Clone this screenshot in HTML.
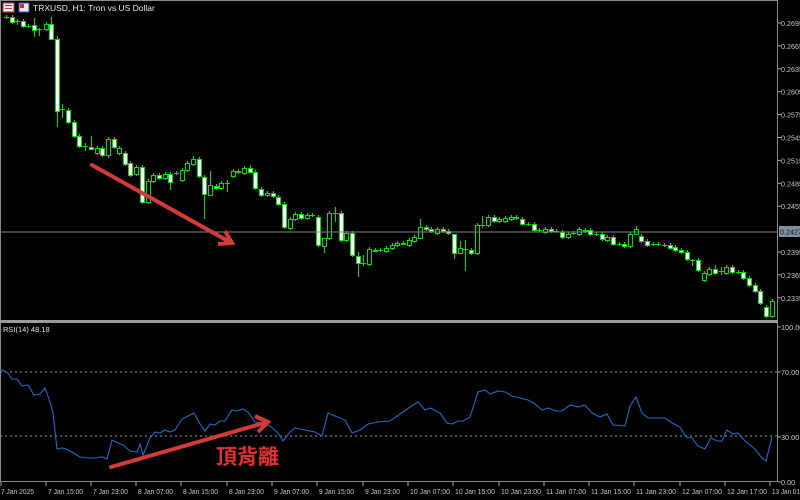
<!DOCTYPE html>
<html><head><meta charset="utf-8"><style>
html,body{margin:0;padding:0;background:#000;width:800px;height:500px;overflow:hidden}
svg{display:block}
text{font-family:"Liberation Sans",sans-serif}
</style></head><body>
<svg id="s" width="800" height="500" xmlns="http://www.w3.org/2000/svg">
<rect width="800" height="500" fill="#000"/>
<g id="candles"></g>
<line x1="0" y1="232" x2="778" y2="232" stroke="#808890" stroke-width="1"/>
<rect x="0.5" y="0.5" width="777" height="481" fill="none" stroke="#8a8a8a"/>
<rect x="0" y="320" width="778" height="3" fill="#9a9a9a"/>
<line x1="0" y1="372" x2="778" y2="372" stroke="#9a9a9a" stroke-dasharray="2,3"/>
<line x1="0" y1="436" x2="778" y2="436" stroke="#9a9a9a" stroke-dasharray="2,3"/>
<polyline id="rsi" fill="none" stroke="#1e6bc4" stroke-width="1.1"/>
<g id="axis" fill="#c8c8c8" font-size="7.3"></g>
<rect x="3" y="3" width="11" height="9" fill="#e8e8f0" stroke="#c04040"/>
<rect x="5" y="5" width="7" height="1" fill="#3050c0"/><rect x="5" y="8" width="7" height="1" fill="#c04040"/>
<rect x="19" y="3" width="10" height="9" fill="#e8e8f0" stroke="#3050c0"/>
<rect x="20" y="4" width="4" height="4" fill="#d03030"/>
<text x="33" y="11" fill="#e8e8e8" font-size="8.5">TRXUSD, H1:  Tron vs US Dollar</text>
<text x="3" y="332" fill="#e0e0e0" font-size="7.5">RSI(14) 48.18</text>
<g stroke="#d33a3a" stroke-width="4" fill="none" stroke-linecap="round">
<line x1="92" y1="165" x2="228" y2="241"/>
<polyline points="218,244 232,243 225,231" stroke-linejoin="miter" stroke-linecap="butt"/>
<line x1="111" y1="467" x2="264" y2="423"/>
<polyline points="255,416 268,422 258,432" stroke-linecap="butt"/>
</g>
<text x="216" y="464" fill="#e03232" font-size="21" font-weight="bold" style='font-family:"Liberation Sans","Noto Sans CJK TC",sans-serif'>頂背離</text>
</svg>
<script>
var C=[[6,17,17,'c'],[12,17,22,'w'],[17,21,23,'c'],[23,21,26,'w'],[28,26,26,'c'],[34,25,30,'w',18,37],[39,29,29,'c',28,36],[46,24,29,'h'],[51,24,39,'w',17,39],[57,39,111,'w',36,127],[62,109,109,'c',104,118],[68,110,122,'w'],[74,122,136,'w'],[79,136,146,'w'],[85,146,146,'c',143,151],[91,147,149,'w',136,150],[97,148,153,'h'],[102,148,155,'w'],[108,139,155,'h',137,158],[114,139,147,'w'],[119,148,153,'h'],[125,153,164,'w'],[130,163,175,'w'],[136,167,174,'h'],[142,167,202,'w'],[148,181,202,'h'],[153,175,181,'h'],[159,175,178,'w'],[165,174,178,'h'],[170,174,182,'w',172,190],[176,173,173,'c'],[182,170,180,'h'],[187,163,170,'h'],[193,159,164,'h',156,166],[199,159,176,'w'],[204,177,194,'w',175,219],[210,185,195,'h',171,195],[216,186,188,'w'],[221,183,188,'h'],[227,183,183,'c',180,192],[233,171,176,'h'],[238,171,172,'w'],[244,168,173,'h'],[250,168,172,'w',165,173],[255,172,188,'w'],[261,189,195,'w'],[267,193,195,'h'],[273,193,196,'w'],[278,197,204,'w'],[284,204,227,'w'],[290,219,228,'h'],[295,214,219,'h'],[301,214,218,'w'],[307,215,218,'h'],[312,215,215,'c'],[318,217,245,'w'],[324,238,246,'h',238,253],[329,213,238,'h'],[335,213,213,'c',207,222],[341,213,240,'w'],[346,233,240,'h'],[352,233,255,'w'],[358,256,263,'w',252,277],[363,263,263,'c',255,266],[369,249,264,'h'],[375,250,250,'w'],[380,250,250,'c'],[386,248,251,'h'],[392,245,248,'h'],[397,243,245,'h'],[403,243,243,'w'],[409,240,245,'h'],[414,237,241,'h'],[420,227,238,'h',219,238],[426,227,229,'w'],[431,229,231,'w'],[437,229,233,'h'],[443,229,231,'w'],[448,231,233,'w'],[454,234,253,'w',234,259],[460,248,253,'h',241,253],[465,249,249,'c',240,271],[471,250,253,'w'],[477,225,253,'h'],[482,225,225,'c',216,228],[488,217,225,'h'],[494,217,221,'w'],[499,219,221,'h'],[505,218,221,'h'],[511,217,219,'h'],[516,217,218,'w'],[522,219,224,'w'],[528,224,224,'c'],[534,224,230,'w'],[539,230,230,'c'],[545,229,232,'h'],[551,229,231,'w'],[556,231,231,'c'],[562,232,237,'w'],[568,234,237,'h'],[573,233,233,'c'],[579,229,234,'h'],[585,230,231,'w'],[590,230,234,'w'],[596,234,234,'c'],[602,234,239,'w'],[607,237,240,'h'],[613,237,244,'w'],[619,244,244,'c'],[624,244,246,'w'],[630,234,246,'h'],[636,229,234,'h',226,234],[641,236,241,'w'],[647,241,245,'w'],[653,244,244,'c'],[658,244,244,'c'],[664,245,245,'c'],[670,245,248,'w'],[675,247,250,'w'],[681,250,252,'w'],[687,252,259,'w'],[692,260,260,'c',259,266],[698,260,270,'w'],[704,273,280,'h'],[709,269,274,'h'],[715,269,273,'w',265,275],[721,271,271,'c',267,275],[726,267,273,'h'],[732,267,272,'w'],[738,272,272,'c'],[743,272,278,'w'],[749,278,285,'w'],[755,285,291,'w'],[760,291,303,'w'],[766,307,316,'w'],[772,301,316,'h']];
var g='';C.forEach(function(c){var x=c[0],a=c[1],b=c[2],t=c[3],h=c.length>4?c[4]:a-2,l=c.length>5?c[5]:b+2;
g+='<line x1="'+(x+.5)+'" y1="'+h+'" x2="'+(x+.5)+'" y2="'+l+'" stroke="#00e000"/>';
if(t=='c'){g+='<line x1="'+(x-2)+'" y1="'+(a+.5)+'" x2="'+(x+3)+'" y2="'+(a+.5)+'" stroke="#00e000"/>';}
else{g+='<rect x="'+(x-1.5)+'" y="'+(a+.5)+'" width="4" height="'+Math.max(b-a,1)+'" fill="'+(t=='w'?'#fff':'#000')+'" stroke="#00e000"/>';}});
document.getElementById('candles').innerHTML=g;
var R=[[0,371],[3,370],[8,373],[12,379],[17,379],[22,386],[28,385],[34,395],[40,394],[45,388],[50,402],[53,413],[57,449],[62,448],[66,449],[72,452],[80,457],[88,458],[95,458],[102,457],[107,459],[112,440],[118,443],[123,445],[130,451],[137,452],[140,444],[143,455],[150,438],[155,432],[160,433],[165,430],[170,432],[175,430],[182,419],[190,415],[194,413],[200,424],[205,431],[210,424],[215,425],[220,421],[225,421],[232,410],[237,411],[243,409],[248,412],[255,422],[260,423],[270,426],[278,433],[283,441],[290,432],[295,428],[305,430],[315,432],[322,436],[328,413],[335,416],[345,420],[352,433],[360,430],[368,424],[378,422],[390,421],[400,414],[410,407],[418,402],[425,410],[430,408],[440,413],[447,423],[452,424],[458,421],[463,421],[470,417],[478,392],[485,390],[490,394],[498,391],[505,392],[512,396],[520,398],[528,400],[535,404],[542,410],[548,408],[556,411],[562,411],[570,405],[578,407],[585,405],[592,413],[600,417],[607,414],[613,425],[625,426],[630,406],[636,397],[642,413],[648,418],[665,418],[672,423],[680,427],[686,437],[692,438],[698,446],[705,449],[711,438],[717,441],[722,441],[727,430],[733,434],[738,433],[745,441],[755,449],[762,458],[766,461],[772,437]];
document.getElementById('rsi').setAttribute('points',R.map(function(p){return p.join(',')}).join(' '));
var a='';var P=['0.2695','0.2665','0.2635','0.2605','0.2575','0.2545','0.2515','0.2485','0.2455',null,'0.2395','0.2365','0.2335'];
P.forEach(function(p,i){if(!p)return;var y=23+i*22.9;a+='<line x1="778" y1="'+y+'" x2="781" y2="'+y+'" stroke="#aaa"/><text x="781" y="'+(y+3)+'" textLength="22" lengthAdjust="spacingAndGlyphs">'+p+'</text>';});
a+='<rect x="779" y="226" width="21" height="11" fill="#8090a0"/><text x="780" y="234.5" fill="#111" textLength="22" lengthAdjust="spacingAndGlyphs">0.2427</text>';
[[100,327],[70,372],[30,437],[0,482]].forEach(function(r){a+='<line x1="778" y1="'+r[1]+'" x2="781" y2="'+r[1]+'" stroke="#aaa"/><text x="781" y="'+(r[1]+3)+'">'+(r[0].toFixed(2))+'</text>';});
var D=['7 Jan 15:00','7 Jan 23:00','8 Jan 07:00','8 Jan 15:00','8 Jan 23:00','9 Jan 07:00','9 Jan 15:00','9 Jan 23:00','10 Jan 07:00','10 Jan 15:00','10 Jan 23:00','11 Jan 07:00','11 Jan 15:00','11 Jan 23:00','12 Jan 07:00','12 Jan 17:00','13 Jan 01'];
a+='<text x="1" y="494" textLength="33" lengthAdjust="spacingAndGlyphs">7 Jan 2025</text><line x1="1" y1="482" x2="1" y2="486" stroke="#aaa"/>';
D.forEach(function(d,i){var x=Math.round(45.5+i*45.3);var L=d.length>=12?40:35;if(d=='13 Jan 01')L=28;a+='<line x1="'+x+'" y1="482" x2="'+x+'" y2="486" stroke="#aaa"/><text x="'+(x+2)+'" y="494" textLength="'+L+'" lengthAdjust="spacingAndGlyphs">'+d+'</text>';});
document.getElementById('axis').innerHTML=a;
</script>
</body></html>
